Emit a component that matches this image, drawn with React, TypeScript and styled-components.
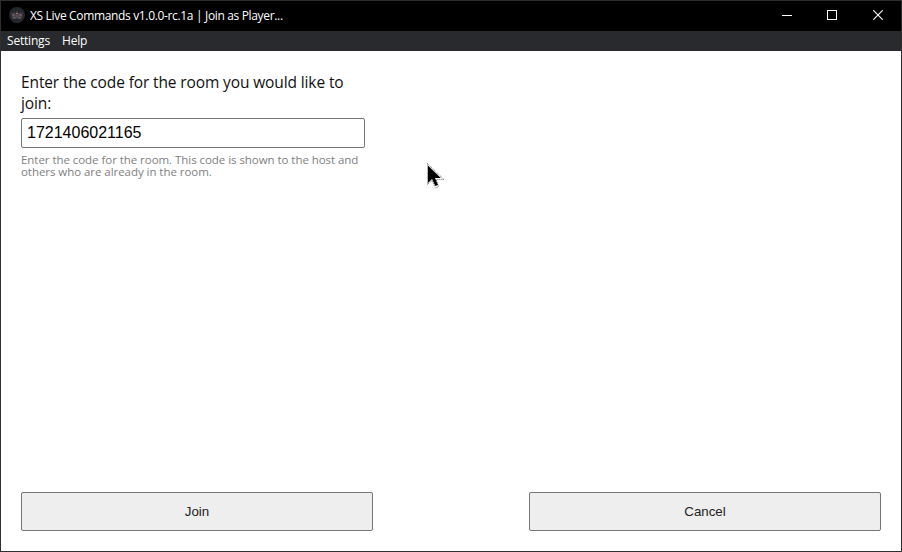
import React from "react";
import styled, { createGlobalStyle } from "styled-components";

const GlobalStyle = createGlobalStyle`
  * { box-sizing: border-box; }
  body { margin: 0; overflow: hidden; background: #fff; }
`;

const Window = styled.div`
  width: 902px;
  height: 552px;
  display: flex;
  flex-direction: column;
  border: 1px solid #2f2f31;
  background: #fff;
  font-family: "Open Sans", sans-serif;
  position: relative;
`;

const TitleBar = styled.header`
  height: 30px;
  flex: none;
  display: flex;
  align-items: flex-start;
  padding: 6px 0 0 8px;
  background: #000;
  color: #fff;
`;

const Title = styled.span`
  flex: 1;
  margin: 1px 0 0 5px;
  font-size: 12px;
  line-height: 16px;
  letter-spacing: -0.34px;
  white-space: nowrap;
`;

const Control = styled.span<{ $width?: number }>`
  width: ${({ $width }) => $width ?? 45}px;
  padding-top: 3px;
  display: flex;
  align-items: flex-start;
  justify-content: center;
`;

const MenuBar = styled.nav`
  height: 20px;
  flex: none;
  display: flex;
  gap: 12px;
  padding-left: 6px;
  background: #292a2d;
  color: #fff;
  font-size: 12px;
  line-height: 20px;
`;

const MenuItem = styled.span<{ $width: number; $tracking: number }>`
  width: ${({ $width }) => $width}px;
  letter-spacing: ${({ $tracking }) => $tracking}px;
  white-space: nowrap;
`;

const Content = styled.main`
  flex: 1;
  display: flex;
  flex-direction: column;
  justify-content: space-between;
  padding: 21px 20px 20px;
`;

const Field = styled.div`
  width: 344px;
  display: flex;
  flex-direction: column;
`;

const Label = styled.label`
  font-size: 15.5px;
  line-height: 21px;
  letter-spacing: -0.12px;
  color: #111;
  white-space: nowrap;
`;

const CodeInput = styled.input`
  height: 30px;
  margin: 4px 0 6px;
  padding: 0 5px;
  border: 1px solid #767676;
  border-radius: 2px;
  background: #fff;
  color: #000;
  font: 16px "Liberation Sans", sans-serif;
  outline: none;
`;

const Hint = styled.p`
  margin: 0;
  font-size: 11.5px;
  line-height: 12px;
  letter-spacing: -0.05px;
  color: #808080;
  white-space: nowrap;
`;

const Actions = styled.footer`
  display: flex;
  justify-content: space-between;
`;

const Button = styled.button`
  width: 352px;
  height: 39px;
  padding: 0;
  border: 1px solid #767676;
  border-radius: 2px;
  background: #eee;
  color: #222;
  font: 13.333px "Liberation Sans", sans-serif;
`;

const Pointer = styled.svg`
  position: absolute;
  left: 426px;
  top: 162px;
`;

const AppIcon = () => (
  <svg width="16" height="16" viewBox="0 0 16 16">
    <circle cx="8" cy="8" r="8" fill="#24272b" />
    <path d="M2 4.5 4 7 4.8 4.4 6.4 7 8 3.2 9.6 7 11.2 4.4 12 7 14 4.5 12.8 11.5H3.2Z" fill="#4b4148" />
    <path d="M3.5 8h2M7 6.5h2M10.5 8h2M4.5 11h2M9.5 11h2M7.5 9h1" stroke="#85797e" />
  </svg>
);

export default function App() {
  return (
    <>
      <GlobalStyle />
      <Window>
        <TitleBar>
          <AppIcon />
          <Title>XS Live Commands v1.0.0-rc.1a | Join as Player...</Title>
          <Control>
            <svg width="11" height="11" viewBox="0 0 11 11" shapeRendering="crispEdges">
              <path d="M0 5.5h10" stroke="#fff" />
            </svg>
          </Control>
          <Control>
            <svg width="11" height="11" viewBox="0 0 11 11" shapeRendering="crispEdges">
              <rect x=".5" y=".5" width="9" height="9" fill="none" stroke="#fff" />
            </svg>
          </Control>
          <Control $width={46}>
            <svg width="10" height="10" viewBox="0 0 10 10">
              <path d="M.3.3 9.7 9.7M9.7.3.3 9.7" stroke="#fff" strokeWidth="1.1" />
            </svg>
          </Control>
        </TitleBar>
        <MenuBar>
          <MenuItem $width={43} $tracking={-0.2}>Settings</MenuItem>
          <MenuItem $width={26} $tracking={-0.2}>Help</MenuItem>
        </MenuBar>
        <Content>
          <Field>
            <Label htmlFor="room-code">
              Enter the code for the room you would like to
              <br />
              join:
            </Label>
            <CodeInput id="room-code" defaultValue="1721406021165" />
            <Hint>
              Enter the code for the room. This code is shown to the host and
              <br />
              others who are already in the room.
            </Hint>
          </Field>
          <Actions>
            <Button>Join</Button>
            <Button>Cancel</Button>
          </Actions>
        </Content>
        <Pointer width="18" height="27" viewBox="0 0 18 27">
          <path
            d="M.5.5V21.5L5 17.5l3 6.8c.7 1.2 3.7.1 3.3-1.4L9.2 16.5H17Z"
            fill="#fff"
            stroke="#444"
            strokeWidth=".8"
            strokeDasharray="1 1"
          />
          <path d="M1 2.5v17.5l4-4 3.4 7 2.6-1-3-7h5.8Z" fill="#000" />
        </Pointer>
      </Window>
    </>
  );
}
